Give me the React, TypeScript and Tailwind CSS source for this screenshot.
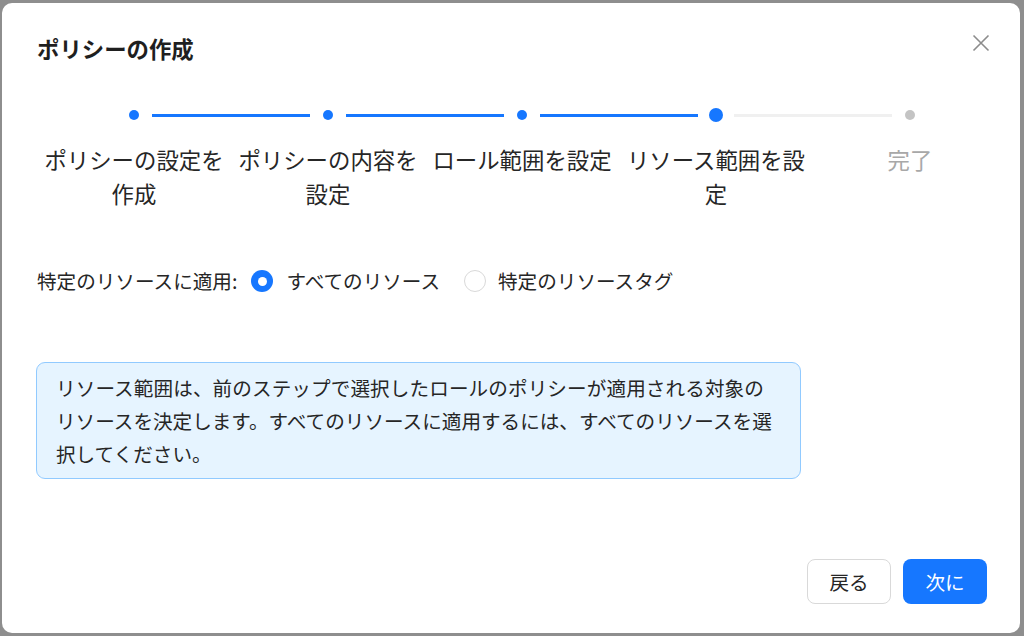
import React from 'react';

const steps = [
  { label: 'ポリシーの設定を作成', state: 'done' },
  { label: 'ポリシーの内容を設定', state: 'done' },
  { label: 'ロール範囲を設定', state: 'done' },
  { label: 'リソース範囲を設定', state: 'current' },
  { label: '完了', state: 'todo' },
];

function Stepper() {
  return (
    <div className="grid grid-cols-[repeat(5,194px)] w-[970px] mt-[43px]">
      {steps.map((step, i) => {
        const leftOn = i > 0;
        const leftBlue = i > 0 && steps[i - 1].state === 'done' && step.state !== 'todo';
        const rightOn = i < steps.length - 1;
        const rightBlue = step.state === 'done';
        return (
          <div key={i} className="flex flex-col">
            <div className="flex items-center h-[14px]">
              <div
                className={`flex-1 h-[3px] mr-[11px] ${leftOn ? (leftBlue ? 'bg-[#1677ff]' : 'bg-[#f0f0f0]') : 'bg-transparent'}`}
              />
              {step.state === 'current' ? (
                <div className="w-[14px] h-[14px] rounded-full bg-[#1677ff]" />
              ) : step.state === 'done' ? (
                <div className="w-[10px] h-[10px] rounded-full bg-[#1677ff] mx-[2px]" />
              ) : (
                <div className="w-[10px] h-[10px] rounded-full bg-[#c4c4c4] mx-[2px]" />
              )}
              <div
                className={`flex-1 h-[3px] ml-[11px] ${rightOn ? (rightBlue ? 'bg-[#1677ff]' : 'bg-[#f0f0f0]') : 'bg-transparent'}`}
              />
            </div>
            <div
              className={`mt-[21px] text-center text-[22.4px] leading-[33.6px] ${step.state === 'todo' ? 'text-[#a8a8a8]' : 'text-[#262626]'}`}
            >
              {step.label}
            </div>
          </div>
        );
      })}
    </div>
  );
}

export default function App() {
  return (
    <div className="w-[1024px] h-[636px] bg-[#8e8e8e] pt-[3px] pl-[2px] pr-[4px] pb-[3px] font-['Noto_Sans_CJK_JP',sans-serif]">
      <div className="h-full bg-white rounded-[10px] flex flex-col pt-[28px] pl-[35px] pr-[33px] pb-[29px]">
        <div className="flex items-start justify-between h-[34px]">
          <h1 className="text-[22.4px] leading-[34px] font-bold text-[#1f1f1f]">ポリシーの作成</h1>
          <button className="w-[18px] h-[18px] mt-[3px] -mr-[3px] text-[#8c8c8c]">
            <svg viewBox="0 0 18 18" className="w-[18px] h-[18px]" fill="none" stroke="currentColor" strokeWidth={1.6}>
              <path d="M1.5 1.5l15 15M16.5 1.5l-15 15" />
            </svg>
          </button>
        </div>

        <Stepper />

        <div className="mt-[54px] flex items-center h-[34px] text-[19.6px] text-[#262626]">
          <span className="mr-[14px]">特定のリソースに適用:</span>
          <label className="flex items-center mr-[24px]">
            <span className="w-[22px] h-[22px] rounded-full bg-[#1677ff] flex items-center justify-center">
              <span className="w-[9px] h-[9px] rounded-full bg-white" />
            </span>
            <span className="ml-[13px]">すべてのリソース</span>
          </label>
          <label className="flex items-center">
            <span className="w-[22px] h-[22px] rounded-full border border-[#d9d9d9] bg-white" />
            <span className="ml-[12px]">特定のリソースタグ</span>
          </label>
        </div>

        <div className="mt-[64px] -ml-[1px] w-[765px] rounded-[9px] border border-[#91caff] bg-[#e6f4ff] pl-[19px] pr-[14px] py-[8px] text-[19.6px] leading-[33px] text-[#262626]">
          <span className="block whitespace-nowrap tracking-[0.1px]">リソース範囲は、前のステップで選択したロールのポリシーが適用される対象の</span>
          <span className="block whitespace-nowrap">リソースを決定します。すべてのリソースに適用するには、すべてのリソースを選</span>
          <span className="block whitespace-nowrap">択してください。</span>
        </div>

        <div className="flex-1" />

        <div className="flex justify-end gap-[12px]">
          <button className="w-[84px] h-[45px] rounded-[8px] border border-[#d9d9d9] bg-white text-[19.6px] text-[#262626]">
            戻る
          </button>
          <button className="w-[84px] h-[45px] rounded-[8px] bg-[#1677ff] text-[19.6px] text-white">
            次に
          </button>
        </div>
      </div>
    </div>
  );
}
